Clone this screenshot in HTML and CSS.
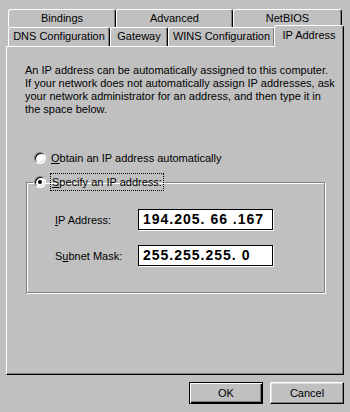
FILE: index.html
```html
<!DOCTYPE html>
<html lang="en">
<head>
  <meta charset="UTF-8" />
  <title>TCP/IP Properties</title>
  <link rel="stylesheet" href="styles.css">
</head>
<body>
  <div class="dialog">
    <div class="tab-row back">
      <div class="tab w-bind">Bindings</div>
      <div class="tab w-adv">Advanced</div>
      <div class="tab w-net">NetBIOS</div>
    </div>
    <div class="tab-row front">
      <div class="tab w-dns">DNS Configuration</div>
      <div class="tab w-gw">Gateway</div>
      <div class="tab w-wins">WINS Configuration</div>
      <div class="tab w-ip active">IP Address</div>
    </div>

    <div class="panel">
      <p class="intro">
        An IP address can be automatically assigned to this computer.<br>
        If your network does not automatically assign IP addresses, ask<br>
        your network administrator for an address, and then type it in<br>
        the space below.
      </p>

      <div class="option">
        <span class="radio"></span>
        <span class="label"><u>O</u>btain an IP address automatically</span>
      </div>

      <fieldset class="group">
        <legend class="option">
          <span class="radio checked"></span>
          <span class="label focus"><u>S</u>pecify an IP address:</span>
        </legend>
        <div class="field">
          <span class="field-label"><u>I</u>P Address:</span>
          <span class="ip-box">194.205. 66 .167</span>
        </div>
        <div class="field">
          <span class="field-label">S<u>u</u>bnet Mask:</span>
          <span class="ip-box">255.255.255. 0</span>
        </div>
      </fieldset>
    </div>

    <div class="buttons">
      <button class="btn default">OK</button>
      <button class="btn">Cancel</button>
    </div>
  </div>
</body>
</html>
```

FILE: styles.css
```css
* {
  box-sizing: border-box;
}

body {
  margin: 0;
  background-color: #c0c0c0;
  font-family: "Liberation Sans", Arial, sans-serif;
  font-size: 11px;
  color: #000;
  overflow: hidden;
}

.dialog {
  width: 350px;
  height: 412px;
  padding: 9px 6px 0 6px;
}

/* tabs */
.tab-row {
  display: flex;
  padding-left: 2px;
  height: 18px;
}

.tab-row.front {
  height: 19px;
}

.tab {
  height: 100%;
  border: 1px solid #fff;
  border-right-color: #000;
  border-bottom: none;
  border-radius: 3px 3px 0 0;
  box-shadow: inset -1px 0 #808080;
  text-align: center;
  line-height: 17px;
  white-space: nowrap;
}

.w-bind { width: 108px; }
.w-adv { width: 117px; }
.w-net { width: 109px; }
.w-dns { width: 102px; }
.w-gw { width: 58px; }
.w-wins { width: 107px; }
.w-ip { width: 68px; }

.tab.active {
  position: relative;
  z-index: 1;
  height: 22px;
  margin-top: -2px;
  margin-bottom: -1px;
  margin-left: -1px;
  width: 70px;
  background-color: #c0c0c0;
  line-height: 18px;
}

/* main sheet */
.panel {
  height: 329px;
  border: 1px solid #fff;
  border-right-color: #000;
  border-bottom-color: #000;
  box-shadow: inset -1px -1px #808080;
  padding: 17px 18px 0 18px;
}

.intro {
  margin: 0;
  line-height: 13px;
  white-space: nowrap;
}

.option {
  display: flex;
  align-items: center;
  gap: 5px;
  height: 14px;
}

.panel > .option {
  margin-top: 35px;
  padding-left: 9px;
}

.radio {
  width: 12px;
  height: 12px;
  flex: none;
  border-radius: 50%;
  background-color: #fff;
  border: 1px solid;
  border-color: #808080 #fff #fff #808080;
  box-shadow: inset 1px 1px #000, inset -1px -1px #dfdfdf;
  display: flex;
  align-items: center;
  justify-content: center;
}

.radio.checked::after {
  content: "";
  width: 4px;
  height: 4px;
  border-radius: 50%;
  background-color: #000;
}

.label {
  white-space: nowrap;
  line-height: 14px;
}

.label.focus {
  outline: 1px dotted #000;
  outline-offset: 0;
  padding: 1px 1px;
}

/* group box */
.group {
  margin: 9px 0 0 1px;
  width: 299px;
  height: 119px;
  padding: 19px 0 0 0;
  border: 1px solid #808080;
  box-shadow: inset 1px 1px #fff, 1px 1px #fff;
}

.group legend {
  margin-left: 6px;
  padding: 0 2px 0 1px;
  height: 16px;
}

.field {
  display: flex;
  align-items: center;
  height: 21px;
  margin-bottom: 15px;
  padding-left: 28px;
}

.field-label {
  width: 83px;
  white-space: nowrap;
}

.ip-box {
  width: 135px;
  height: 21px;
  background-color: #fff;
  border: 1px solid #000;
  box-shadow: 1px 1px #fff;
  padding-left: 4px;
  font-weight: bold;
  font-size: 14px;
  letter-spacing: 1px;
  line-height: 19px;
  white-space: pre;
}

/* buttons */
.buttons {
  display: flex;
  justify-content: flex-end;
  gap: 7px;
  margin-top: 7px;
}

.btn {
  width: 74px;
  height: 22px;
  font-family: "Liberation Sans", Arial, sans-serif;
  font-size: 11px;
  color: #000;
  background-color: #c0c0c0;
  border: 1px solid;
  border-color: #fff #000 #000 #fff;
  box-shadow: inset -1px -1px #808080, inset 1px 1px #dfdfdf;
  padding: 0;
}

.btn.default {
  border: 1px solid #000;
  box-shadow: inset 1px 1px #fff, inset -1px -1px #000, inset -2px -2px #808080;
}
```
